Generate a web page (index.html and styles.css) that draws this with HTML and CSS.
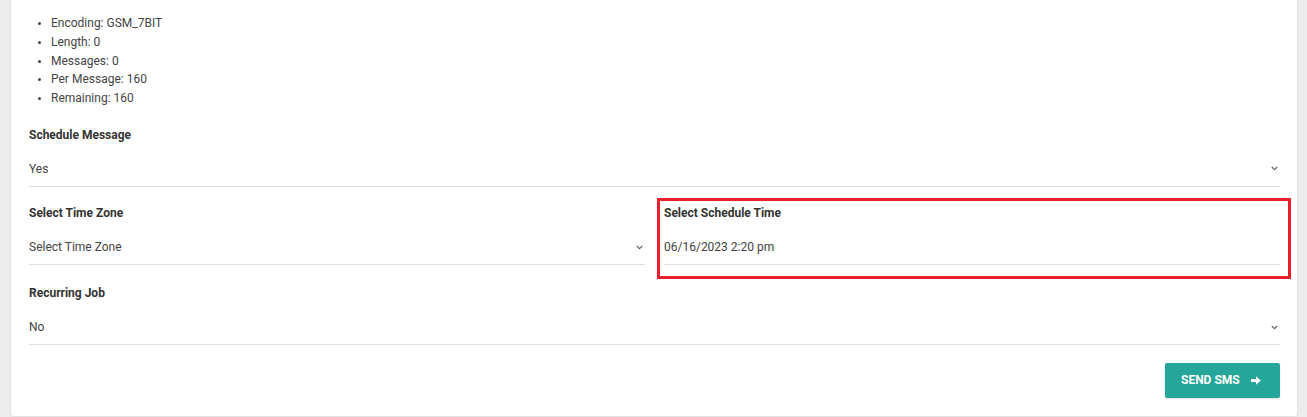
FILE: index.html
```html
<!DOCTYPE html>
<html lang="en">
<head>
<meta charset="utf-8">
<title>Send SMS</title>
<link rel="stylesheet" href="styles.css">
</head>
<body>
<div class="page">
  <div class="card">
    <ul class="stats">
      <li>Encoding: GSM_7BIT</li>
      <li>Length: 0</li>
      <li>Messages: 0</li>
      <li>Per Message: 160</li>
      <li>Remaining: 160</li>
    </ul>

    <div class="field">
      <div class="label">Schedule Message</div>
      <div class="select"><span>Yes</span><svg class="chev" width="7" height="5" viewBox="0 0 7 5"><path d="M0.8 1 L3.5 3.6 L6.2 1" fill="none" stroke="#666" stroke-width="1.2"/></svg></div>
    </div>

    <div class="row">
      <div class="field">
        <div class="label">Select Time Zone</div>
        <div class="select"><span>Select Time Zone</span><svg class="chev" width="7" height="5" viewBox="0 0 7 5"><path d="M0.8 1 L3.5 3.6 L6.2 1" fill="none" stroke="#666" stroke-width="1.2"/></svg></div>
      </div>
      <div class="field highlighted">
        <div class="label">Select Schedule Time</div>
        <div class="select"><span>06/16/2023 2:20 pm</span></div>
      </div>
    </div>

    <div class="field recurring">
      <div class="label">Recurring Job</div>
      <div class="select"><span>No</span><svg class="chev" width="7" height="5" viewBox="0 0 7 5"><path d="M0.8 1 L3.5 3.6 L6.2 1" fill="none" stroke="#666" stroke-width="1.2"/></svg></div>
    </div>

    <div class="actions">
      <button class="send" type="button">SEND SMS
        <svg class="arrow" width="10" height="9" viewBox="0 0 10 9"><path d="M0 3.1 H5 V0.3 L9.8 4.5 L5 8.7 V5.9 H0 Z" fill="#fff"/></svg>
      </button>
    </div>
  </div>
</div>
</body>
</html>
```

FILE: styles.css
```css
* { box-sizing: border-box; }

html, body {
  margin: 0;
  padding: 0;
  background: #ececec;
  font-family: Roboto, "Liberation Sans", Arial, sans-serif;
  font-size: 12px;
  color: #444;
}

.page {
  padding: 0 9px 2px 10px;
}

.card {
  background: #fff;
  border: 1px solid #e2e2e2;
  border-top: none;
  border-radius: 0 0 4px 4px;
  padding: 14px 17px 18px 18px;
}

.stats {
  margin: 0;
  padding: 0 0 0 22px;
  list-style: disc;
  line-height: 18.75px;
  color: #444;
}

.stats li::marker {
  font-size: 10px;
}

.field {
  position: relative;
}

.stats + .field {
  margin-top: 18px;
}

.field + .row {
  margin-top: 17.5px;
}

.row + .field {
  margin-top: 18.5px;
}

.recurring .select {
  margin-top: 7px;
}

.label {
  font-weight: 700;
  color: #333;
  line-height: 19px;
}

.select {
  margin-top: 6.5px;
  height: 35.5px;
  border-bottom: 1px solid #dedede;
  display: flex;
  align-items: center;
  justify-content: space-between;
  color: #444;
}

.chev {
  margin-right: 2px;
  display: block;
}

.row {
  display: grid;
  grid-template-columns: 1fr 1fr;
  column-gap: 19px;
}

.highlighted::after {
  content: "";
  position: absolute;
  top: -6px;
  left: -7px;
  right: -11px;
  bottom: -14px;
  border: 3px solid #e8202b;
  pointer-events: none;
}

.actions {
  display: flex;
  justify-content: flex-end;
  margin-top: 17.5px;
}

.send {
  display: flex;
  align-items: center;
  gap: 11px;
  height: 35px;
  width: 115px;
  padding: 0 0 0 16px;
  background: #26a69a;
  border: none;
  border-radius: 2px;
  color: #fff;
  font-family: Roboto, "Liberation Sans", Arial, sans-serif;
  font-weight: 700;
  font-size: 12px;
  box-shadow: 0 1px 2px rgba(0,0,0,0.12);
}

.arrow {
  display: block;
}
```
